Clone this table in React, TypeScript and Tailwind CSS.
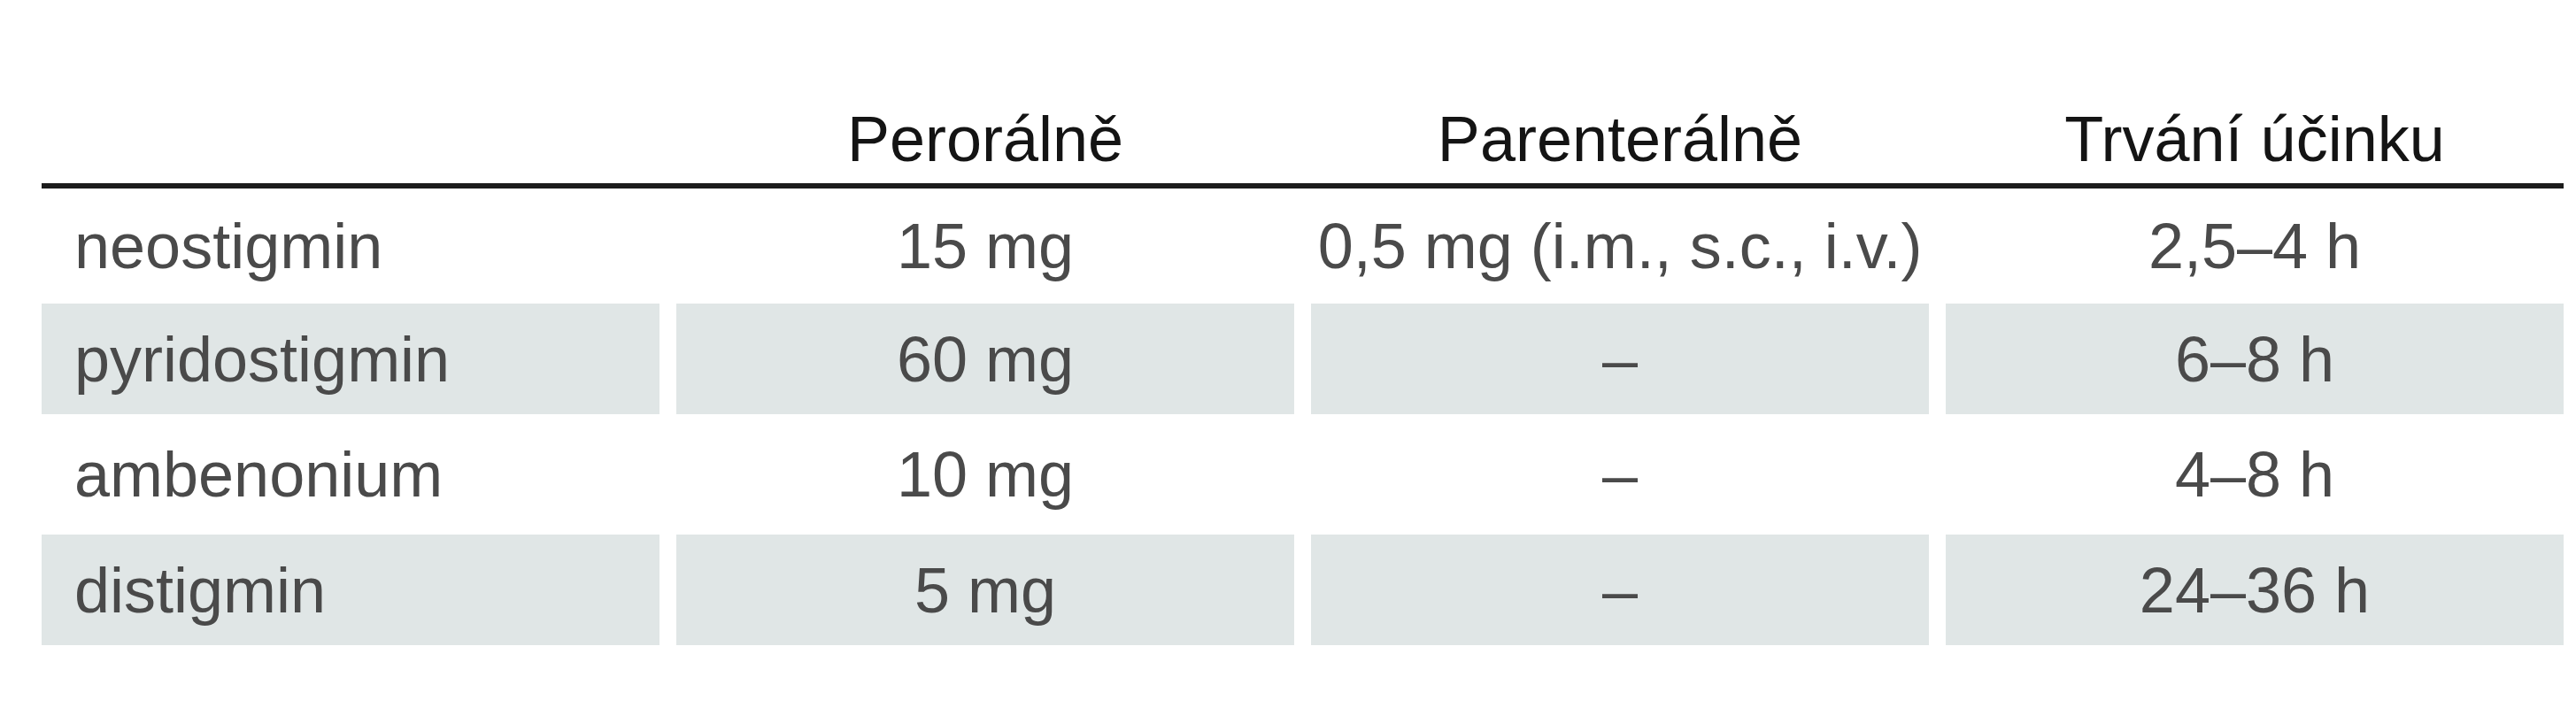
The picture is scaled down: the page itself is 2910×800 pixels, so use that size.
const rows = [
  { name: "neostigmin", oral: "15 mg", parenteral: "0,5 mg (i.m., s.c., i.v.)", duration: "2,5–4 h", shaded: false, height: "h-[130px]" },
  { name: "pyridostigmin", oral: "60 mg", parenteral: "–", duration: "6–8 h", shaded: true, height: "h-[125px]" },
  { name: "ambenonium", oral: "10 mg", parenteral: "–", duration: "4–8 h", shaded: false, height: "h-[136px]" },
  { name: "distigmin", oral: "5 mg", parenteral: "–", duration: "24–36 h", shaded: true, height: "h-[125px]" },
];

const App = () => {
  return (
    <div className="w-[2910px] h-[800px] bg-white pl-[47px] pr-[14px] font-['Liberation_Sans',Arial,sans-serif]">
      {/* Header */}
      <div className="grid grid-cols-4 gap-x-[19px] items-end h-[207px] pb-[14px]">
        <div />
        <div className="text-center text-[72px] leading-[72px] text-[#141414]">Perorálně</div>
        <div className="text-center text-[72px] leading-[72px] text-[#141414]">Parenterálně</div>
        <div className="text-center text-[72px] leading-[72px] text-[#141414]">Trvání účinku</div>
      </div>
      <div className="h-[6px] bg-[#1c1c1c]" />

      {/* Body */}
      {rows.map((row) => {
        const cell = row.shaded ? "bg-[#e0e6e6]" : "bg-white";
        return (
          <div key={row.name} className={`grid grid-cols-4 gap-x-[19px] ${row.height}`}>
            <div className={`${cell} flex items-center pl-[37px] text-[72px] leading-[72px] text-[#4a4a4a]`}>
              {row.name}
            </div>
            <div className={`${cell} flex items-center justify-center text-[72px] leading-[72px] text-[#4a4a4a]`}>
              {row.oral}
            </div>
            <div className={`${cell} flex items-center justify-center text-[72px] leading-[72px] text-[#4a4a4a]`}>
              {row.parenteral}
            </div>
            <div className={`${cell} flex items-center justify-center text-[72px] leading-[72px] text-[#4a4a4a]`}>
              {row.duration}
            </div>
          </div>
        );
      })}
    </div>
  );
};

export default App;
